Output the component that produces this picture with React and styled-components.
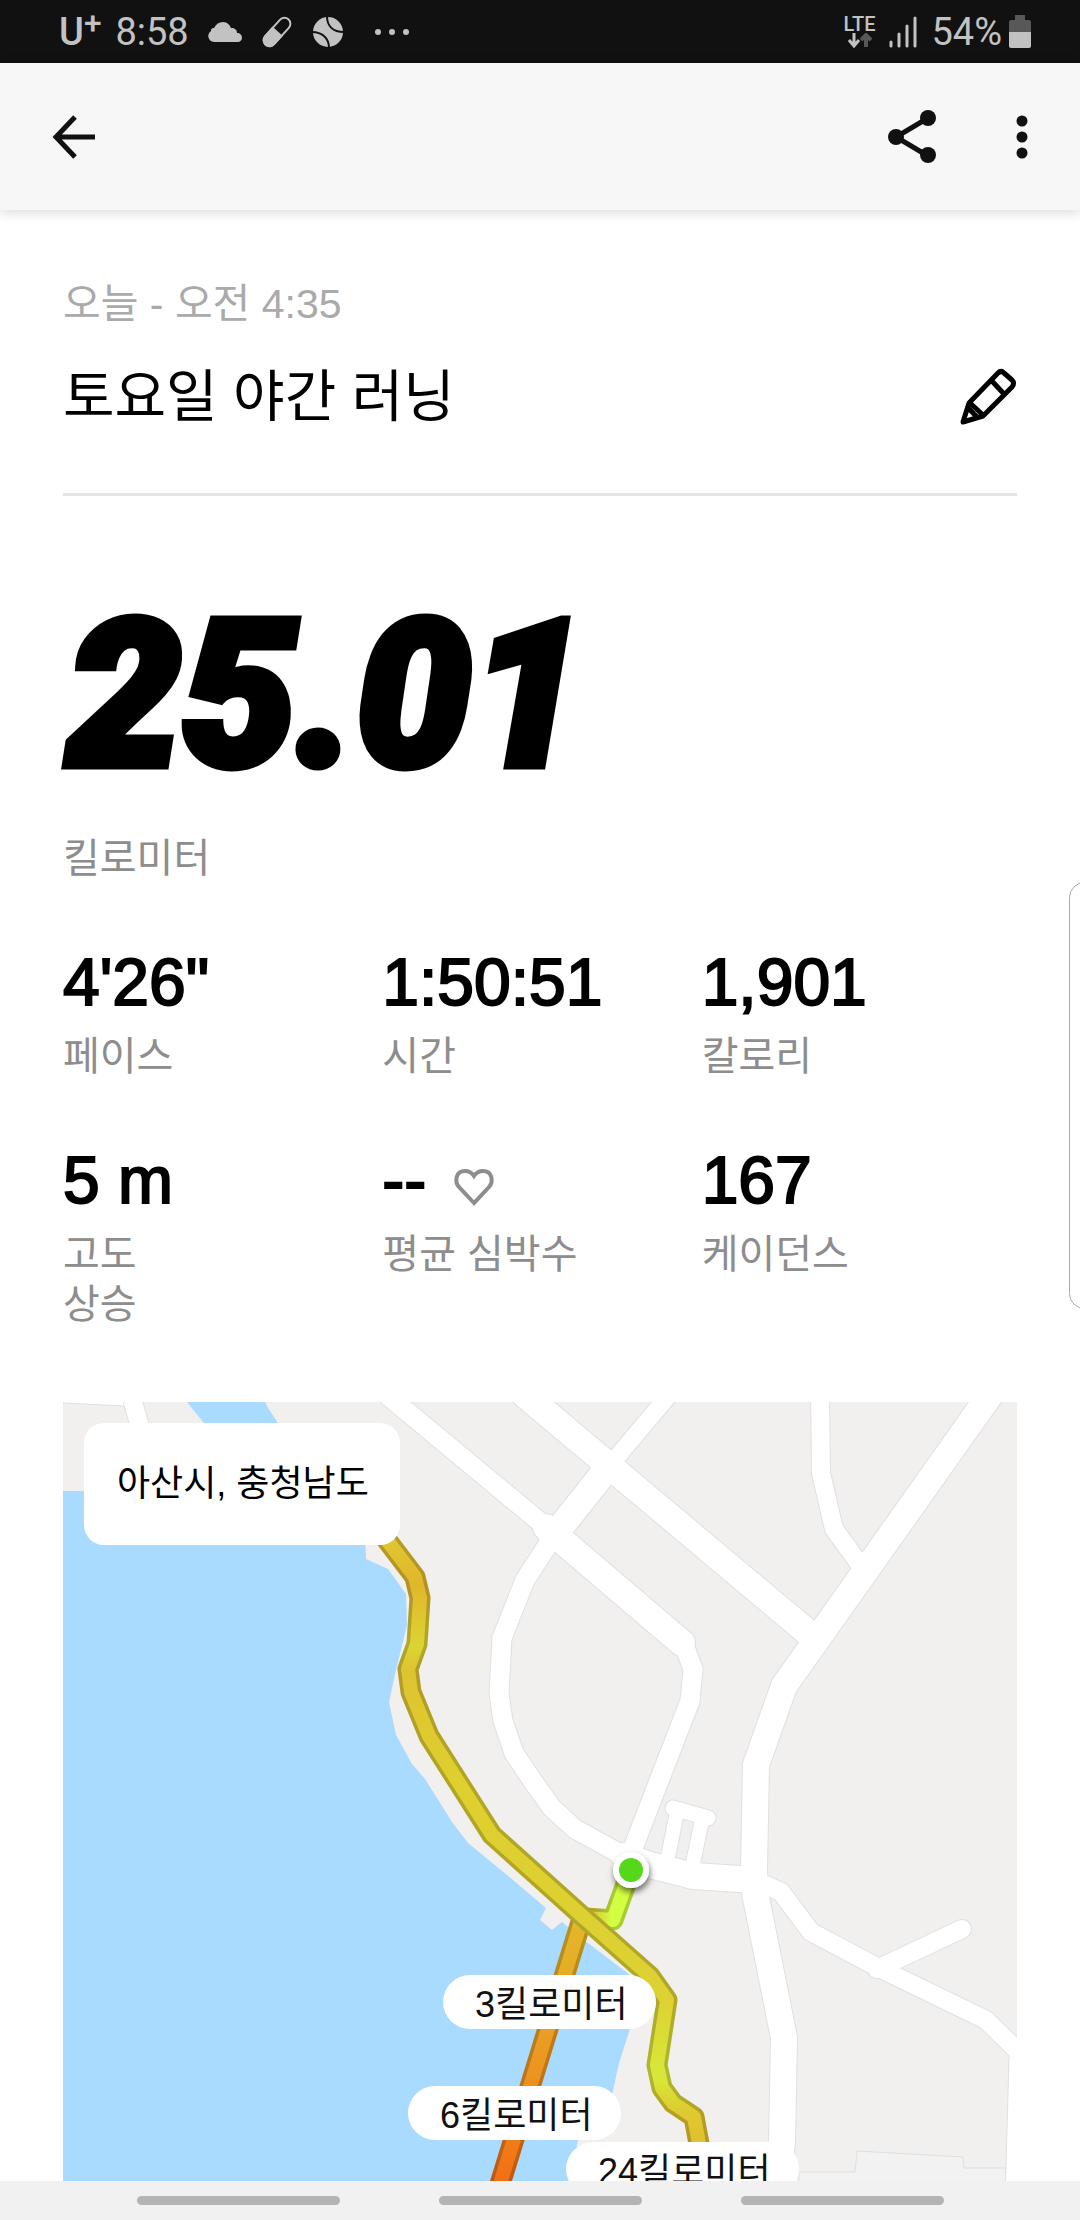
import styled, { createGlobalStyle } from 'styled-components';

const GlobalStyle = createGlobalStyle`
  * {
    box-sizing: border-box;
  }
  body {
    margin: 0;
    background: #fff;
    color: #000;
    font-family: 'Liberation Sans', 'Noto Sans CJK KR', sans-serif;
  }
  h1, p, dl, dd {
    margin: 0;
    font-weight: 400;
  }
`;

const Page = styled.div`
  display: flex;
  flex-direction: column;
  min-height: 100vh;
`;

/* status bar */

const StatusBar = styled.div`
  display: flex;
  align-items: center;
  justify-content: space-between;
  height: 63px;
  padding: 0 49px 0 59px;
  background: #111;
  color: #c2c2c2;
  font-family: Roboto, sans-serif;
  font-size: 38px;
  line-height: 44px;
`;

const StatusGroup = styled.div`
  display: flex;
  align-items: center;
  gap: ${({ gap }) => gap}px;
`;

const Carrier = styled.span`
  display: flex;
  font-weight: 500;
  line-height: 48px;

  sup {
    line-height: 32px;
  }
`;

const Network = styled.span`
  display: flex;
  flex-direction: column;
  align-items: center;
  font-size: 20px;
  font-weight: 500;
  line-height: 18px;
`;

/* app bar */

const AppBar = styled.header`
  display: flex;
  align-items: center;
  justify-content: space-between;
  height: 147px;
  padding: 0 42px;
  background: #f7f7f7;
  box-shadow: 0 2px 12px rgba(0, 0, 0, 0.16);
`;

const Actions = styled.div`
  display: flex;
  align-items: center;
  gap: 62px;
`;

const IconButton = styled.button`
  display: flex;
  align-items: center;
  justify-content: center;
  width: ${({ size }) => size || 64}px;
  height: 64px;
  padding: 0;
  border: 0;
  background: none;
  color: #111;
`;

/* run */

const Main = styled.main`
  display: flex;
  flex: 1;
  flex-direction: column;
  padding: 69px 63px 0;
`;

const RunDate = styled.p`
  color: #aaa;
  font-size: 41px;
  line-height: 50px;
`;

const TitleRow = styled.div`
  display: flex;
  align-items: center;
  justify-content: space-between;
  padding: 28px 0 56px;
  border-bottom: 3px solid #e5e5e5;
`;

const Title = styled.h1`
  font-size: 56px;
  line-height: 80px;
`;

const Distance = styled.p`
  margin-top: 120px;
  padding-left: 4px;
  font-family: Roboto, sans-serif;
  font-size: 204px;
  font-style: italic;
  font-weight: 900;
  line-height: 160px;
  -webkit-text-stroke: 9px #000;
`;

const Unit = styled.p`
  margin-top: 57px;
  color: #8d8d8d;
  font-size: 40px;
  line-height: 50px;
`;

const Stats = styled.dl`
  display: grid;
  grid-template-columns: repeat(3, 1fr);
  gap: 59px 4px;
  margin: 59px 0 73px;
`;

const Stat = styled.div`
  display: flex;
  flex-direction: column-reverse;
  justify-content: flex-end;
  gap: 9px;

  dt {
    color: #8d8d8d;
    font-size: 40px;
    line-height: 50px;
    white-space: pre-line;
  }
  dd {
    display: flex;
    align-items: baseline;
    gap: 27px;
    font-size: 66px;
    line-height: 80px;
    -webkit-text-stroke: 2px #000;
  }
`;

/* map */

const MapBox = styled.section`
  position: relative;
  flex: 1;
  min-height: 480px;
  overflow: hidden;
  background: #f1f0ee;
`;

const MapDrawing = styled.svg`
  position: absolute;
  inset: 0;
  width: 100%;
  height: 100%;
`;

const Place = styled.div`
  position: absolute;
  top: 21px;
  left: 21px;
  padding: 34px 31px 34px 33px;
  border-radius: 20px;
  background: #fff;
  font-size: 36px;
  line-height: 54px;
  white-space: nowrap;
`;

const Milestone = styled.span`
  position: absolute;
  top: ${({ y }) => y}px;
  left: ${({ x }) => x}px;
  padding: 6px 28px 0 32px;
  border-radius: 27px;
  background: #fff;
  color: #111;
  font-size: 36px;
  line-height: 48px;
  white-space: nowrap;
`;

const EdgeHandle = styled.div`
  position: absolute;
  top: 882px;
  right: -20px;
  width: 31px;
  height: 427px;
  border: 1px solid #aaa;
  border-radius: 16px;
  background: #fff;
`;

const Clip = styled.div`
  position: relative;
  overflow: hidden;
`;

const NavBar = styled.nav`
  display: flex;
  align-items: center;
  justify-content: space-around;
  height: 39px;
  padding: 0 87px;
  background: #f1f1f1;
`;

const NavKey = styled.button`
  width: 203px;
  height: 9px;
  padding: 0;
  border: 0;
  border-radius: 5px;
  background: #b4b4b4;
`;

const stats = [
  { label: '페이스', value: '4\'26"' },
  { label: '시간', value: '1:50:51' },
  { label: '칼로리', value: '1,901' },
  { label: '고도\n상승', value: '5 m' },
  { label: '평균 심박수', value: '--', heart: true },
  { label: '케이던스', value: '167' },
];

const milestones = [
  { km: 3, x: 380, y: 573 },
  { km: 6, x: 345, y: 684 },
  { km: 24, x: 503, y: 740 },
];

const roads = [
  { d: 'M133 1395L133 1402L145 1445', w: 18 },
  { d: 'M387 1395L546 1527', w: 19 },
  { d: 'M546 1527L682 1643', w: 26 },
  { d: 'M684 1645L693 1669L690 1701L633 1848L628 1862', w: 19 },
  { d: 'M525 1395L812 1636', w: 26 },
  { d: 'M669 1395L606 1470', w: 17 },
  { d: 'M606 1470L552 1538', w: 26 },
  { d: 'M549 1543L525 1580L502 1638L499 1693L503 1721L514 1753L532 1780L552 1808L575 1829L624 1856', w: 19 },
  { d: 'M624 1856L650 1865L694 1876L755 1880', w: 26 },
  { d: 'M820 1390L821 1473L834 1529L858 1562', w: 18 },
  { d: 'M990 1395L784 1686L756 1765L754 1871L755 1893L784 2038L782 2142L776 2190', w: 26 },
  { d: 'M755 1880L781 1892L811 1932L877 1967L986 2020L1030 2063', w: 18 },
  { d: 'M877 1969L962 1929', w: 18 },
  { d: 'M1024 2060L1020 2200', w: 29 },
  { d: 'M673 1808L708 1818', w: 15 },
  { d: 'M677 1812L667 1862', w: 14 },
  { d: 'M702 1820L692 1868', w: 14 },
];

const trail =
  'M380 1531L415 1577L420 1598L417 1644L408 1669L411 1692L429 1736L492 1835L580 1914L650 1976L667 2000L657 2065L662 2088L673 2103L694 2117L703 2165';

const routes = [
  { d: 'M631 1870L613 1920L585 1918', stroke: 'url(#start)' },
  { d: 'M584 1912L501 2181L495 2200', stroke: 'url(#sea)' },
  { d: trail, stroke: 'url(#trail)' },
];

const RunMap = () => (
  <MapDrawing viewBox="63 1402 954 779" preserveAspectRatio="xMinYMin slice" aria-hidden="true">
    <defs>
      <linearGradient id="trail" gradientUnits="userSpaceOnUse" x1="0" y1="1535" x2="0" y2="2150">
        <stop offset="0" stopColor="#e0c830" />
        <stop offset="0.08" stopColor="#e1b72b" />
        <stop offset="0.18" stopColor="#dcd433" />
        <stop offset="0.22" stopColor="#dec331" />
        <stop offset="0.4" stopColor="#dfcf2f" />
        <stop offset="0.75" stopColor="#ddd133" />
        <stop offset="0.88" stopColor="#d7e83a" />
        <stop offset="0.94" stopColor="#dfc930" />
        <stop offset="1" stopColor="#e0bd2d" />
      </linearGradient>
      <linearGradient id="sea" gradientUnits="userSpaceOnUse" x1="0" y1="1915" x2="0" y2="2181">
        <stop offset="0" stopColor="#e2b92a" />
        <stop offset="0.6" stopColor="#ec9420" />
        <stop offset="1" stopColor="#f26f14" />
      </linearGradient>
      <linearGradient id="start" gradientUnits="userSpaceOnUse" x1="588" y1="0" x2="612" y2="0">
        <stop offset="0" stopColor="#e0b830" />
        <stop offset="1" stopColor="#d3ff42" />
      </linearGradient>
      <filter id="shadow" x="-50%" y="-50%" width="200%" height="200%">
        <feDropShadow dx="1" dy="4" stdDeviation="3" floodOpacity="0.55" />
      </filter>
    </defs>

    <g fill="#a9daff">
      <path d="M187 1402L204 1423L240 1470H300L278 1423L268 1408L265 1402Z" />
      <path d="M63 1491H300L365 1530L366 1559L388 1569L406 1594L407 1625L396 1670L389 1702L396 1735L412 1764L425 1779L452 1822L468 1843L507 1875L546 1908L540 1920L552 1930L562 1922L588 1943L630 1975L644 1995L630 2029L619 2063L612 2095L590 2125L578 2140L570 2181H63Z" />
    </g>
    <path d="M799 2190V2172H855L857 2151L963 2157L964 2168H1006V2190Z" fill="#f2f2f2" stroke="#dedfe1" />

    <path d="M63 1403L125 1406L150 1400H63Z" fill="#fff" stroke="#e0e0e4" />
    <g fill="none" stroke="#dfe0e4" strokeLinecap="round">
      {roads.map(({ d, w }) => <path key={d} d={d} strokeWidth={w + 2} />)}
    </g>
    <g fill="none" stroke="#fff" strokeLinecap="round">
      {roads.map(({ d, w }) => <path key={d} d={d} strokeWidth={w} />)}
    </g>

    {routes.map(({ d, stroke }) => (
      <g key={d} fill="none" strokeLinejoin="round">
        <path d={d} stroke={stroke} strokeWidth="21" />
        <path d={d} stroke="#000" strokeOpacity="0.2" strokeWidth="21" />
        <path d={d} stroke={stroke} strokeWidth="14" />
      </g>
    ))}

    <circle cx="631" cy="1870" r="18" fill="#fff" filter="url(#shadow)" />
    <circle cx="631" cy="1870" r="12" fill="#55d71a" />
  </MapDrawing>
);

const Heart = () => (
  <svg width="42" height="36" viewBox="0 2 42 36" overflow="visible" fill="none" stroke="#8d8d8d" strokeWidth="4">
    <path d="M21 38L6 22C1 16 3 6 12 6C17 6 19 8 21 11C23 8 25 6 30 6C39 6 41 16 36 22Z" />
  </svg>
);

const App = () => (
  <>
    <GlobalStyle />
    <Clip>
      <Page>
        <StatusBar>
          <StatusGroup gap={19}>
            <StatusGroup gap={14}>
              <Carrier>U<sup>+</sup></Carrier>
              <span>8:58</span>
            </StatusGroup>
            <svg width="34" height="20" viewBox="0 0 34 20" fill="currentColor">
              <path d="M6 20A6 6 0 0 1 3 9C3 6 5 6 6 6C8 2 11 0 15 0C19 0 22 3 23 6C27 6 29 8 29 11C32 11 34 13 34 16C34 18 32 20 30 20Z" />
            </svg>
            <svg width="32" height="32" viewBox="0 0 32 32">
              <g transform="rotate(42 16 16)" stroke="#c2c2c2" strokeWidth="2">
                <rect x="10" y="-1" width="12" height="34" rx="6" fill="none" />
                <path d="M10 16H22V27A6 6 0 0 1 10 27Z" fill="#c2c2c2" />
              </g>
            </svg>
            <svg width="32" height="32" viewBox="0 0 32 32">
              <circle cx="16" cy="16" r="15" fill="#c2c2c2" />
              <path d="M15 0C15 10 21 16 32 16M0 16C10 16 17 22 17 32" fill="none" stroke="#111" strokeWidth="2" />
            </svg>
            <svg width="58" height="8" viewBox="-12 0 58 8" fill="currentColor">
              <circle cx="3" cy="4" r="3" />
              <circle cx="17" cy="4" r="3" />
              <circle cx="31" cy="4" r="3" />
            </svg>
          </StatusGroup>
          <StatusGroup gap={14}>
            <Network>
              LTE
              <svg width="24" height="15" viewBox="0 0 24 15" fill="none" strokeWidth="4">
                <path d="M6 0V13M1 7L6 13L11 7" stroke="#c2c2c2" strokeWidth="3" />
                <path d="M18 14V2M13 7L18 2L23 7" stroke="#585858" />
              </svg>
            </Network>
            <svg width="28" height="32" viewBox="0 0 28 32" stroke="#c2c2c2" strokeWidth="3" strokeLinecap="round">
              <path d="M2 26V30M10 18V30M18 10V30M26 2V30" />
            </svg>
            <StatusGroup gap={7}>
              <span>54%</span>
              <svg width="22" height="34" viewBox="0 0 22 34">
                <path d="M6 0H16V5H20Q22 5 22 7V18H0V7Q0 5 2 5H6Z" fill="#585858" />
                <path d="M0 17H22V31Q22 33 20 33H2Q0 33 0 31Z" fill="#c2c2c2" />
              </svg>
            </StatusGroup>
          </StatusGroup>
        </StatusBar>

        <AppBar>
          <IconButton aria-label="뒤로">
            <svg width="44" height="44" viewBox="0 0 44 44" fill="none" stroke="currentColor" strokeWidth="5">
              <path d="M43 22H4M23 2L4 22L23 42" />
            </svg>
          </IconButton>
          <Actions>
            <IconButton aria-label="공유">
              <svg width="48" height="54" viewBox="0 0 48 54" fill="currentColor">
                <path d="M40 8L8 27L40 46" fill="none" stroke="currentColor" strokeWidth="5" />
                <circle cx="40" cy="8" r="8" />
                <circle cx="8" cy="27" r="8" />
                <circle cx="40" cy="45" r="8" />
              </svg>
            </IconButton>
            <IconButton size={32} aria-label="더보기">
              <svg width="12" height="44" viewBox="0 0 12 44" fill="currentColor">
                <circle cx="6" cy="6" r="5.5" />
                <circle cx="6" cy="22" r="5.5" />
                <circle cx="6" cy="38" r="5.5" />
              </svg>
            </IconButton>
          </Actions>
        </AppBar>

        <Main>
          <RunDate>오늘 - 오전 4:35</RunDate>
          <TitleRow>
            <Title>토요일 야간 러닝</Title>
            <IconButton size={58} aria-label="수정">
              <svg width="58" height="58" viewBox="0 0 58 58" fill="none" stroke="#000" strokeWidth="5" strokeLinejoin="round">
                <path d="M4 54L10 35L39 5Q42 2 45 5L53 12Q56 15 53 19L24 48Z" />
                <path d="M32 12L45 26M11 35L24 47M9 40L18 49" />
              </svg>
            </IconButton>
          </TitleRow>

          <Distance>25.01</Distance>
          <Unit>킬로미터</Unit>

          <Stats>
            {stats.map(({ label, value, heart }) => (
              <Stat key={label}>
                <dt>{label}</dt>
                <dd>{value}{heart && <Heart />}</dd>
              </Stat>
            ))}
          </Stats>

          <MapBox>
            <RunMap />
            {milestones.map(({ km, x, y }) => (
              <Milestone key={km} x={x} y={y}>{km}킬로미터</Milestone>
            ))}
            <Place>아산시, 충청남도</Place>
          </MapBox>
        </Main>

        <NavBar>
          <NavKey aria-label="최근 앱" />
          <NavKey aria-label="홈" />
          <NavKey aria-label="이전" />
        </NavBar>
      </Page>
      <EdgeHandle />
    </Clip>
  </>
);

export default App;
